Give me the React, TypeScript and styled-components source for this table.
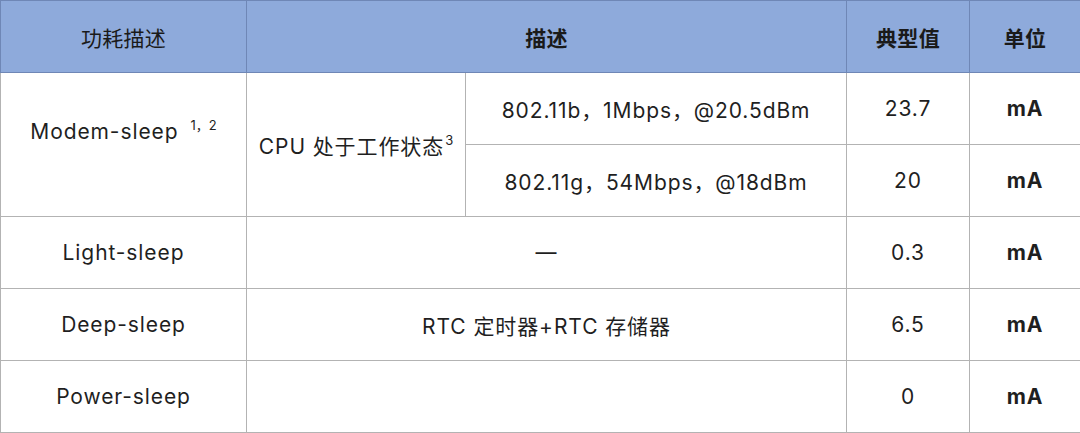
import React from 'react';
import styled, { createGlobalStyle } from 'styled-components';

const GlobalStyle = createGlobalStyle`
  html, body {
    margin: 0;
    padding: 0;
    background: #ffffff;
  }
  body {
    font-family: Inter, "Noto Sans CJK SC", "Liberation Sans", sans-serif;
    color: #1f1f1f;
  }
`;

const HEAD_LINE = '#6f87b6';
const BODY_LINE = '#b3b3b3';

const Table = styled.table`
  width: 1080px;
  border-collapse: collapse;
  table-layout: fixed;
  font-size: 21px;
  letter-spacing: 0.9px;
`;

const HeadRow = styled.tr`
  height: 72px;
  background: #8eaadb;
`;

const Row = styled.tr`
  height: 72px;
`;

const HeadCell = styled.th<{ $bold?: boolean }>`
  border: 1px solid ${HEAD_LINE};
  font-weight: ${({ $bold }) => ($bold ? 700 : 400)};
  text-align: center;
  vertical-align: middle;
  padding: 0;
  color: #1a1a1a;
  letter-spacing: 0.3px;
`;

const Cell = styled.td<{ $bold?: boolean; $lift?: number }>`
  border: 1px solid ${BODY_LINE};
  font-weight: ${({ $bold }) => ($bold ? 700 : 400)};
  text-align: center;
  vertical-align: middle;
  padding: 0 0 ${({ $lift }) => $lift ?? 0}px 0;
  white-space: nowrap;
`;

const Sup = styled.sup<{ $gap?: number }>`
  font-size: 13px;
  vertical-align: 9px;
  line-height: 0;
  letter-spacing: 0;
  margin-left: ${({ $gap }) => $gap ?? 1}px;
`;

type SimpleRow = { mode: string; desc: string; value: string };

const simpleRows: SimpleRow[] = [
  { mode: 'Light-sleep', desc: '—', value: '0.3' },
  { mode: 'Deep-sleep', desc: 'RTC 定时器+RTC 存储器', value: '6.5' },
  { mode: 'Power-sleep', desc: '', value: '0' },
];

export default function App() {
  return (
    <>
      <GlobalStyle />
      <Table>
        <colgroup>
          <col style={{ width: 246 }} />
          <col style={{ width: 219 }} />
          <col style={{ width: 381 }} />
          <col style={{ width: 123 }} />
          <col style={{ width: 111 }} />
        </colgroup>
        <thead>
          <HeadRow>
            <HeadCell>功耗描述</HeadCell>
            <HeadCell colSpan={2} $bold>描述</HeadCell>
            <HeadCell $bold>典型值</HeadCell>
            <HeadCell $bold>单位</HeadCell>
          </HeadRow>
        </thead>
        <tbody>
          <Row>
            <Cell rowSpan={2} $lift={26}>
              Modem-sleep<Sup $gap={12}>1，2</Sup>
            </Cell>
            <Cell rowSpan={2}>
              CPU 处于工作状态<Sup>3</Sup>
            </Cell>
            <Cell>802.11b，1Mbps，@20.5dBm</Cell>
            <Cell>23.7</Cell>
            <Cell $bold>mA</Cell>
          </Row>
          <Row>
            <Cell>802.11g，54Mbps，@18dBm</Cell>
            <Cell>20</Cell>
            <Cell $bold>mA</Cell>
          </Row>
          {simpleRows.map((r) => (
            <Row key={r.mode}>
              <Cell>{r.mode}</Cell>
              <Cell colSpan={2}>{r.desc}</Cell>
              <Cell>{r.value}</Cell>
              <Cell $bold>mA</Cell>
            </Row>
          ))}
        </tbody>
      </Table>
    </>
  );
}
